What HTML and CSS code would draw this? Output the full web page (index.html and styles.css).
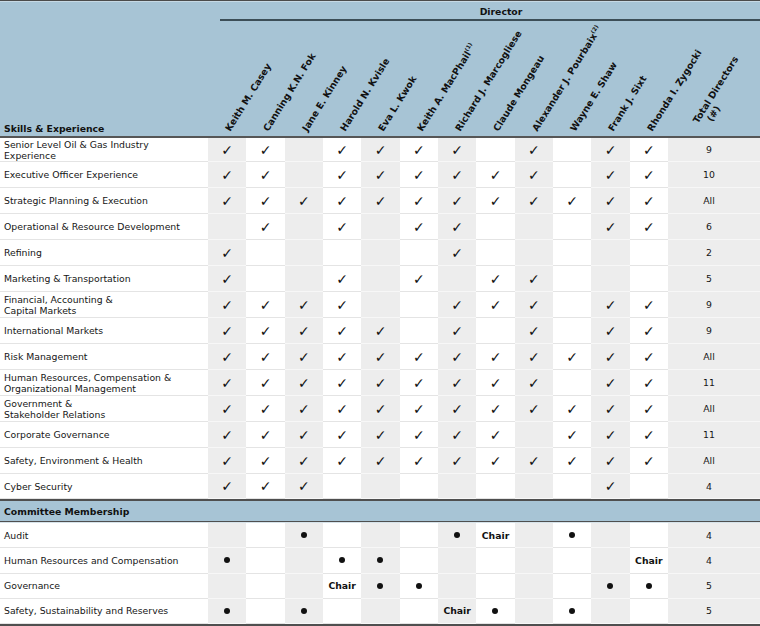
FILE: index.html
```html
<!DOCTYPE html>
<html lang="en">
<head>
<meta charset="utf-8">
<title>Director Skills Matrix</title>
<link rel="stylesheet" href="styles.css">
</head>
<body>
<div class="tbl">
  <div class="head">
    <div class="dir-row"><div class="dir">Director</div></div>
    <div class="names">
      <div class="hlabel">Skills &amp; Experience</div>
      <div class="nm"><span>Keith M. Casey</span></div>
      <div class="nm"><span>Canning K.N. Fok</span></div>
      <div class="nm"><span>Jane E. Kinney</span></div>
      <div class="nm"><span>Harold N. Kvisle</span></div>
      <div class="nm"><span>Eva L. Kwok</span></div>
      <div class="nm"><span>Keith A. MacPhail<sup>(1)</sup></span></div>
      <div class="nm"><span>Richard J. Marcogliese</span></div>
      <div class="nm"><span>Claude Mongeau</span></div>
      <div class="nm"><span>Alexander J. Pourbaix<sup>(2)</sup></span></div>
      <div class="nm"><span>Wayne E. Shaw</span></div>
      <div class="nm"><span>Frank J. Sixt</span></div>
      <div class="nm"><span>Rhonda I. Zygocki</span></div>
      <div class="nm nm-tot"><span>Total Directors<br><em class="ind">(#)</em></span></div>
    </div>
  </div>

  <div class="row first">
    <div class="lbl">Senior Level Oil &amp; Gas Industry<br>Experience</div>
    <div><span class="ck">✓</span></div><div><span class="ck">✓</span></div><div></div><div><span class="ck">✓</span></div><div><span class="ck">✓</span></div><div><span class="ck">✓</span></div><div><span class="ck">✓</span></div><div></div><div><span class="ck">✓</span></div><div></div><div><span class="ck">✓</span></div><div><span class="ck">✓</span></div>
    <div class="tot">9</div>
  </div>
  <div class="row">
    <div class="lbl">Executive Officer Experience</div>
    <div><span class="ck">✓</span></div><div><span class="ck">✓</span></div><div></div><div><span class="ck">✓</span></div><div><span class="ck">✓</span></div><div><span class="ck">✓</span></div><div><span class="ck">✓</span></div><div><span class="ck">✓</span></div><div><span class="ck">✓</span></div><div></div><div><span class="ck">✓</span></div><div><span class="ck">✓</span></div>
    <div class="tot">10</div>
  </div>
  <div class="row">
    <div class="lbl">Strategic Planning &amp; Execution</div>
    <div><span class="ck">✓</span></div><div><span class="ck">✓</span></div><div><span class="ck">✓</span></div><div><span class="ck">✓</span></div><div><span class="ck">✓</span></div><div><span class="ck">✓</span></div><div><span class="ck">✓</span></div><div><span class="ck">✓</span></div><div><span class="ck">✓</span></div><div><span class="ck">✓</span></div><div><span class="ck">✓</span></div><div><span class="ck">✓</span></div>
    <div class="tot">All</div>
  </div>
  <div class="row">
    <div class="lbl">Operational &amp; Resource Development</div>
    <div></div><div><span class="ck">✓</span></div><div></div><div><span class="ck">✓</span></div><div></div><div><span class="ck">✓</span></div><div><span class="ck">✓</span></div><div></div><div></div><div></div><div><span class="ck">✓</span></div><div><span class="ck">✓</span></div>
    <div class="tot">6</div>
  </div>
  <div class="row">
    <div class="lbl">Refining</div>
    <div><span class="ck">✓</span></div><div></div><div></div><div></div><div></div><div></div><div><span class="ck">✓</span></div><div></div><div></div><div></div><div></div><div></div>
    <div class="tot">2</div>
  </div>
  <div class="row">
    <div class="lbl">Marketing &amp; Transportation</div>
    <div><span class="ck">✓</span></div><div></div><div></div><div><span class="ck">✓</span></div><div></div><div><span class="ck">✓</span></div><div></div><div><span class="ck">✓</span></div><div><span class="ck">✓</span></div><div></div><div></div><div></div>
    <div class="tot">5</div>
  </div>
  <div class="row">
    <div class="lbl">Financial, Accounting &amp;<br>Capital Markets</div>
    <div><span class="ck">✓</span></div><div><span class="ck">✓</span></div><div><span class="ck">✓</span></div><div><span class="ck">✓</span></div><div></div><div></div><div><span class="ck">✓</span></div><div><span class="ck">✓</span></div><div><span class="ck">✓</span></div><div></div><div><span class="ck">✓</span></div><div><span class="ck">✓</span></div>
    <div class="tot">9</div>
  </div>
  <div class="row">
    <div class="lbl">International Markets</div>
    <div><span class="ck">✓</span></div><div><span class="ck">✓</span></div><div><span class="ck">✓</span></div><div><span class="ck">✓</span></div><div><span class="ck">✓</span></div><div></div><div><span class="ck">✓</span></div><div></div><div><span class="ck">✓</span></div><div></div><div><span class="ck">✓</span></div><div><span class="ck">✓</span></div>
    <div class="tot">9</div>
  </div>
  <div class="row">
    <div class="lbl">Risk Management</div>
    <div><span class="ck">✓</span></div><div><span class="ck">✓</span></div><div><span class="ck">✓</span></div><div><span class="ck">✓</span></div><div><span class="ck">✓</span></div><div><span class="ck">✓</span></div><div><span class="ck">✓</span></div><div><span class="ck">✓</span></div><div><span class="ck">✓</span></div><div><span class="ck">✓</span></div><div><span class="ck">✓</span></div><div><span class="ck">✓</span></div>
    <div class="tot">All</div>
  </div>
  <div class="row">
    <div class="lbl">Human Resources, Compensation &amp;<br>Organizational Management</div>
    <div><span class="ck">✓</span></div><div><span class="ck">✓</span></div><div><span class="ck">✓</span></div><div><span class="ck">✓</span></div><div><span class="ck">✓</span></div><div><span class="ck">✓</span></div><div><span class="ck">✓</span></div><div><span class="ck">✓</span></div><div><span class="ck">✓</span></div><div></div><div><span class="ck">✓</span></div><div><span class="ck">✓</span></div>
    <div class="tot">11</div>
  </div>
  <div class="row">
    <div class="lbl">Government &amp;<br>Stakeholder Relations</div>
    <div><span class="ck">✓</span></div><div><span class="ck">✓</span></div><div><span class="ck">✓</span></div><div><span class="ck">✓</span></div><div><span class="ck">✓</span></div><div><span class="ck">✓</span></div><div><span class="ck">✓</span></div><div><span class="ck">✓</span></div><div><span class="ck">✓</span></div><div><span class="ck">✓</span></div><div><span class="ck">✓</span></div><div><span class="ck">✓</span></div>
    <div class="tot">All</div>
  </div>
  <div class="row">
    <div class="lbl">Corporate Governance</div>
    <div><span class="ck">✓</span></div><div><span class="ck">✓</span></div><div><span class="ck">✓</span></div><div><span class="ck">✓</span></div><div><span class="ck">✓</span></div><div><span class="ck">✓</span></div><div><span class="ck">✓</span></div><div><span class="ck">✓</span></div><div></div><div><span class="ck">✓</span></div><div><span class="ck">✓</span></div><div><span class="ck">✓</span></div>
    <div class="tot">11</div>
  </div>
  <div class="row">
    <div class="lbl">Safety, Environment &amp; Health</div>
    <div><span class="ck">✓</span></div><div><span class="ck">✓</span></div><div><span class="ck">✓</span></div><div><span class="ck">✓</span></div><div><span class="ck">✓</span></div><div><span class="ck">✓</span></div><div><span class="ck">✓</span></div><div><span class="ck">✓</span></div><div><span class="ck">✓</span></div><div><span class="ck">✓</span></div><div><span class="ck">✓</span></div><div><span class="ck">✓</span></div>
    <div class="tot">All</div>
  </div>
  <div class="row short">
    <div class="lbl">Cyber Security</div>
    <div><span class="ck">✓</span></div><div><span class="ck">✓</span></div><div><span class="ck">✓</span></div><div></div><div></div><div></div><div></div><div></div><div></div><div></div><div><span class="ck">✓</span></div><div></div>
    <div class="tot">4</div>
  </div>

  <div class="sect">Committee Membership</div>
  <div class="crows">
    <div class="row crow">
      <div class="lbl">Audit</div>
      <div></div><div></div><div><span class="dot"></span></div><div></div><div></div><div></div><div><span class="dot"></span></div><div><span class="chair">Chair</span></div><div></div><div><span class="dot"></span></div><div></div><div></div>
      <div class="tot">4</div>
    </div>
    <div class="row crow">
      <div class="lbl">Human Resources and Compensation</div>
      <div><span class="dot"></span></div><div></div><div></div><div><span class="dot"></span></div><div><span class="dot"></span></div><div></div><div></div><div></div><div></div><div></div><div></div><div><span class="chair">Chair</span></div>
      <div class="tot">4</div>
    </div>
    <div class="row crow">
      <div class="lbl">Governance</div>
      <div></div><div></div><div></div><div><span class="chair">Chair</span></div><div><span class="dot"></span></div><div><span class="dot"></span></div><div></div><div></div><div></div><div></div><div><span class="dot"></span></div><div><span class="dot"></span></div>
      <div class="tot">5</div>
    </div>
    <div class="row crow">
      <div class="lbl">Safety, Sustainability and Reserves</div>
      <div><span class="dot"></span></div><div></div><div><span class="dot"></span></div><div></div><div></div><div></div><div><span class="chair">Chair</span></div><div><span class="dot"></span></div><div></div><div><span class="dot"></span></div><div></div><div></div>
      <div class="tot">5</div>
    </div>
  </div>
</div>
</body>
</html>
```

FILE: styles.css
```css
* {
  box-sizing: border-box;
  margin: 0;
  padding: 0;
}

html, body {
  background: #ffffff;
}

body {
  width: 760px;
  height: 626px;
  overflow: hidden;
  font-family: "DejaVu Sans", Verdana, sans-serif;
  font-size: 9.3px;
  color: #161616;
}

.tbl {
  width: 760px;
  border-top: 1px solid #4b4b4b;
  border-bottom: 2px solid #4f4f4f;
}

/* ---------- header ---------- */
.head {
  background: #a7c4d5;
  border-top: 1px solid #c6d9e4;
  border-bottom: 2px solid #565656;
}

.dir-row {
  height: 19px;
}

.dir {
  margin-left: 220px;
  height: 19px;
  padding: 3px 0 0 22px;
  line-height: 14px;
  text-align: center;
  font-weight: bold;
  color: #111;
  border-bottom: 2px solid #3c4e57;
}

.names {
  height: 115px;
  display: grid;
  grid-template-columns: 208px repeat(12, 1fr) 92px;
}

.hlabel {
  align-self: end;
  padding: 0 0 2px 4px;
  line-height: 11px;
  font-weight: bold;
  color: #111;
}

.nm {
  display: flex;
  flex-direction: column;
  justify-content: flex-end;
}

.nm span {
  display: block;
  width: 0;
  height: 11px;
  line-height: 11px;
  margin: 0 0 3px 24px;
  white-space: nowrap;
  font-weight: bold;
  color: #111;
  transform: rotate(-58deg);
  transform-origin: 0 100%;
}

.nm sup {
  font-size: 5.5px;
  line-height: 0;
  vertical-align: 4px;
}

.nm-tot span {
  height: 22px;
  margin: 0 0 5px 41px;
}

.ind {
  font-style: normal;
  padding-left: 9px;
}

/* ---------- body rows ---------- */
.row {
  display: grid;
  grid-template-columns: 208px repeat(12, 1fr) 92px;
  height: 26px;
}

.row.first {
  height: 24px;
}

.row.short {
  height: 25px;
}

.row.crow {
  height: 25.25px;
}

.row > div {
  display: flex;
  align-items: center;
  justify-content: center;
  border-bottom: 1px solid #e4e4e4;
}

.row > div:nth-child(even) {
  background: #ededed;
  border-bottom-color: #f7f7f7;
}

.row > .lbl {
  justify-content: flex-start;
  padding-left: 4px;
  line-height: 11px;
}

.row > .tot {
  padding-right: 10px;
}

.ck {
  font-size: 14px;
  font-weight: bold;
  line-height: 1;
  color: #111;
}

.dot {
  width: 6px;
  height: 6px;
  border-radius: 50%;
  background: #111;
}

.chair {
  font-weight: bold;
  color: #111;
}

/* ---------- committee section ---------- */
.sect {
  height: 23px;
  display: flex;
  align-items: center;
  padding-left: 4px;
  background: #a7c4d5;
  border-top: 2px solid #4f4f4f;
  border-bottom: 1px solid #4f4f4f;
  font-weight: bold;
  color: #111;
}

.crows {
  border-top: 1px solid #d6e3ea;
}
```
